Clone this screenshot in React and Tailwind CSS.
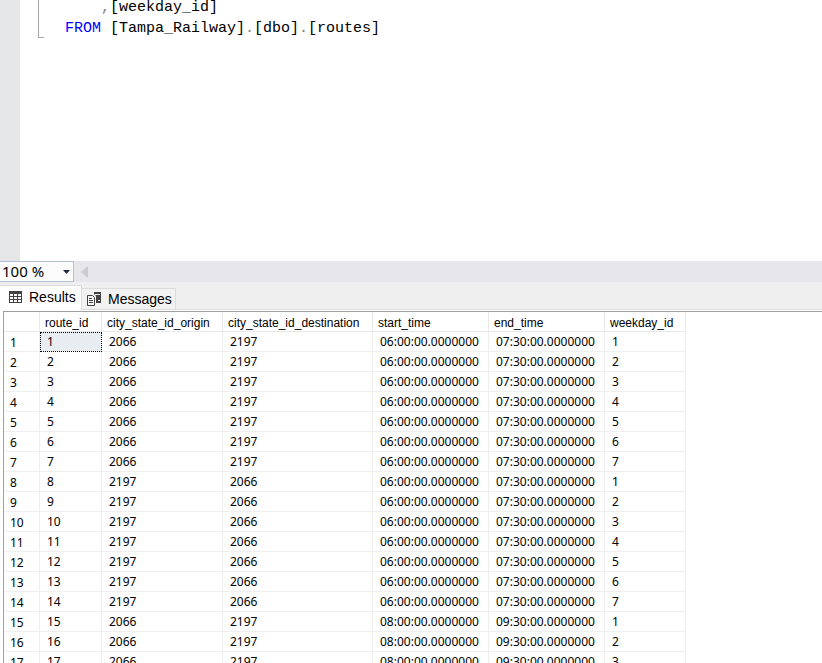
import React from 'react';

const columns = [
  { name: 'route_id', width: 'w-[62px]' },
  { name: 'city_state_id_origin', width: 'w-[121px]' },
  { name: 'city_state_id_destination', width: 'w-[150px]' },
  { name: 'start_time', width: 'w-[116px]' },
  { name: 'end_time', width: 'w-[116px]' },
  { name: 'weekday_id', width: 'w-[81px]' },
];

const trips = [
  ['2066', '2197', '06:00:00.0000000', '07:30:00.0000000'],
  ['2197', '2066', '06:00:00.0000000', '07:30:00.0000000'],
  ['2066', '2197', '08:00:00.0000000', '09:30:00.0000000'],
];

// every trip runs on all seven weekdays
const rows = trips
  .flatMap((trip) => [1, 2, 3, 4, 5, 6, 7].map((day) => [...trip, day]))
  .map((row, i) => [i + 1, ...row])
  .slice(0, 17);

const GridIcon = () => (
  <svg width="13" height="12" viewBox="0 0 13 12" shapeRendering="crispEdges">
    <rect width="13" height="12" fill="#424242" />
    <g fill="#fff">
      {[3, 6, 9].map((y) =>
        [1, 5, 9].map((x) => <rect key={`${x}-${y}`} x={x} y={y} width="3" height="2" />)
      )}
    </g>
  </svg>
);

const MessagesIcon = () => (
  <svg width="15" height="14" viewBox="0 0 15 14">
    <path d="M7 0h7v11H9V4L7 2z" fill="#424242" />
    <path d="M8 2.500h5" stroke="#efefef" />
    <rect x="11" y="8" width="2" height="1" fill="#efefef" />
    <path d="M0.5 3.500h5l2 2v8h-7z" fill="#f4f4f4" stroke="#424242" />
    <path d="M2 6.500h3M2 8.500h4M2 10.500h4" stroke="#424242" />
  </svg>
);

const Editor = () => (
  <div className="flex h-[261px] shrink-0 bg-white">
    <div className="w-5 bg-[#e6e7e8]" />
    <div className="ml-[18px] mr-[21px] h-[38px] w-[6px] border-b border-l border-[#a5a5a5]" />
    <pre className="-mt-[3px] font-['Liberation_Mono',monospace] text-[15px] leading-[21px] text-black">
      <span className="text-[#808080]">{'    ,'}</span>
      {'[weekday_id]\n'}
      <span className="text-[#0000ff]">FROM</span>
      {' [Tampa_Railway]'}
      <span className="text-[#808080]">.</span>
      [dbo]
      <span className="text-[#808080]">.</span>
      [routes]
    </pre>
  </div>
);

const ZoomBar = () => (
  <div className="flex h-[21px] shrink-0 items-center bg-[#e6e6eb]">
    <div className="relative h-full w-[74px]">
      <select
        aria-label="Zoom"
        className="block h-full w-full appearance-none border-y border-r border-[#b4c0d6] bg-[#fcfcfc] pl-[2px] font-['Noto_Sans',sans-serif] text-[15px] leading-[19px] text-black"
      >
        <option>100 %</option>
      </select>
      <svg className="pointer-events-none absolute right-1 top-2" width="7" height="5" viewBox="0 0 7 5">
        <path d="M0 1h7L3.500 5z" fill="#1b293e" />
      </svg>
    </div>
    <button type="button" aria-label="Scroll left" className="ml-[7px]">
      <svg width="7" height="12" viewBox="0 0 7 12">
        <path d="M7 0v12L0 6z" fill="#c9cad2" />
      </svg>
    </button>
  </div>
);

const Tabs = () => (
  <div className="flex h-7 shrink-0 items-end border-b border-[#dcdcdc] bg-[#efefef] font-['Liberation_Sans',sans-serif] text-[14px] text-black">
    <button type="button" className="-mb-px flex h-[25px] w-[82px] items-center gap-[7px] border-r border-t border-[#dcdcdc] bg-white pb-[2px] pl-[9px]">
      <GridIcon />
      Results
    </button>
    <button type="button" className="flex h-[21px] w-[94px] items-center gap-[6px] border-r border-t border-[#dcdcdc] bg-[#f2f2f2] pl-[5px]">
      <MessagesIcon />
      Messages
    </button>
  </div>
);

const ResultsGrid = () => (
  <div className="min-h-0 flex-1 overflow-hidden bg-white pl-[3px] pt-px">
    <div className="h-full overflow-hidden border-l border-t border-[#a0a0a0]">
      <table className="w-[682px] table-fixed border-separate border-spacing-0 text-left text-[12px] text-black">
        <thead className="font-['Liberation_Sans',sans-serif]">
          <tr className="h-5">
            <th className="w-9 border-b border-r border-[#e8e8e8] p-0" />
            {columns.map((col) => (
              <th
                key={col.name}
                className={`${col.width} whitespace-nowrap border-b border-r border-[#e8e8e8] pb-0 pl-[5px] pr-0 pt-[3px] font-normal leading-[16px]`}
              >
                {col.name}
              </th>
            ))}
          </tr>
        </thead>
        <tbody className="font-['Noto_Sans',sans-serif]">
          {rows.map((row, i) => (
            <tr key={row[0]} className="h-5">
              <th className="border-b border-r border-[#efefef] pb-0 pl-[6px] pr-0 pt-[2px] font-normal leading-[17px]">
                {i + 1}
              </th>
              {row.map((value, j) => (
                <td
                  key={columns[j].name}
                  className={
                    i === 0 && j === 0
                      ? 'border-b border-r border-[#efefef] bg-[#e8edf2] py-0 pl-[7px] pr-0 leading-[19px] outline-1 outline-dotted -outline-offset-1 outline-black'
                      : 'border-b border-r border-[#efefef] py-0 pl-[7px] pr-0 leading-[19px]'
                  }
                >
                  {value}
                </td>
              ))}
            </tr>
          ))}
        </tbody>
      </table>
    </div>
  </div>
);

const App = () => {
  return (
    <div className="flex h-screen flex-col overflow-hidden bg-white">
      <Editor />
      <ZoomBar />
      <Tabs />
      <ResultsGrid />
    </div>
  );
};

export default App;
